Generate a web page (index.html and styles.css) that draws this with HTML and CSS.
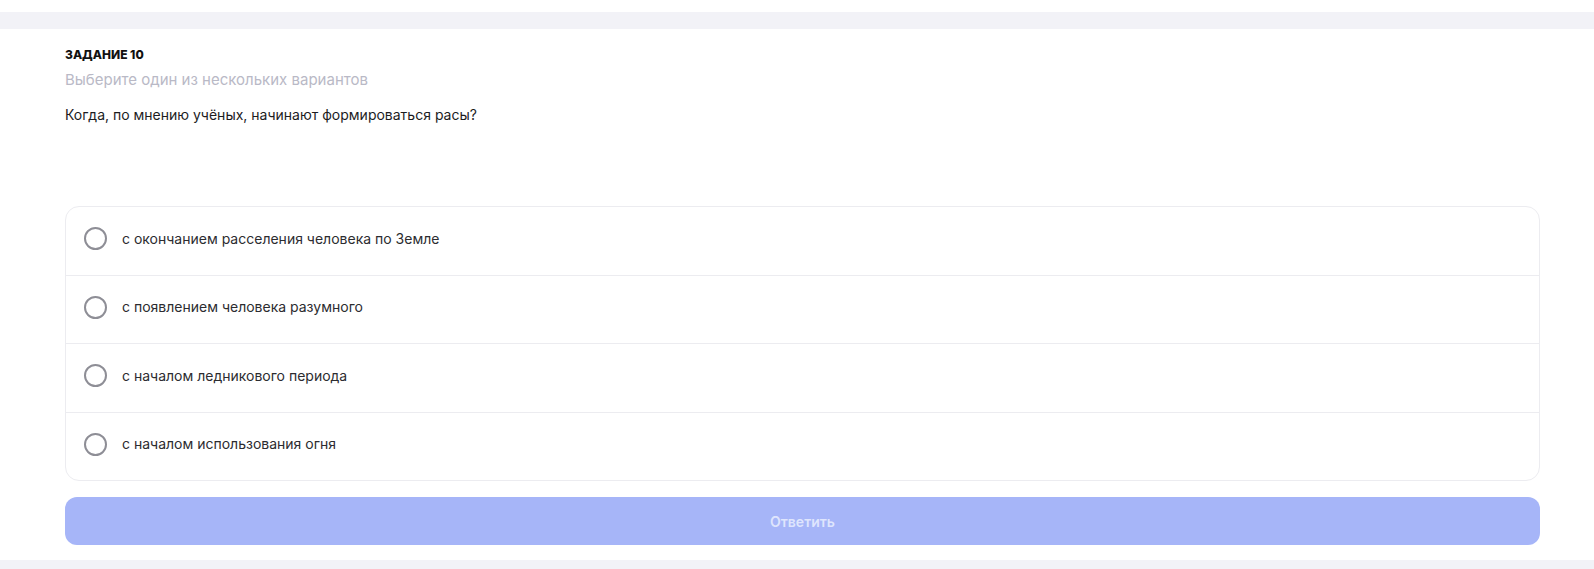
FILE: index.html
```html
<!DOCTYPE html>
<html lang="ru">
<head>
    <meta charset="UTF-8">
    <meta name="viewport" content="width=device-width, initial-scale=1.0">
    <title>Задание 10</title>
    <link rel="stylesheet" href="styles.css">
</head>
<body>
    <div class="top-gap"></div>
    <div class="divider-band"></div>

    <section class="task">
        <h4 class="task-title">Задание 10</h4>
        <div class="task-hint">Выберите один из нескольких вариантов</div>
        <p class="task-question">Когда, по мнению учёных, начинают формироваться расы?</p>

        <form class="answers">
            <label class="answer">
                <input type="radio" name="answer" value="1">
                <span class="answer-mark"></span>
                <span class="answer-text">с окончанием расселения человека по Земле</span>
            </label>
            <label class="answer">
                <input type="radio" name="answer" value="2">
                <span class="answer-mark"></span>
                <span class="answer-text">с появлением человека разумного</span>
            </label>
            <label class="answer">
                <input type="radio" name="answer" value="3">
                <span class="answer-mark"></span>
                <span class="answer-text">с началом ледникового периода</span>
            </label>
            <label class="answer">
                <input type="radio" name="answer" value="4">
                <span class="answer-mark"></span>
                <span class="answer-text">с началом использования огня</span>
            </label>
        </form>

        <button type="button" class="submit-btn" disabled>Ответить</button>
    </section>

    <div class="divider-band"></div>
</body>
</html>
```
FILE: styles.css
```css
body {
    margin: 0;
    background: #fff;
    font-family: Inter, "Noto Sans", sans-serif;
    color: #1c1c1e;
}

.top-gap {
    height: 12px;
}

/* серые полосы между блоками заданий */
.divider-band {
    height: 17px;
    background: #f2f2f7;
}

.task {
    padding: 18px 54px 15px 65px;
}

.task-title {
    margin: 0;
    font-size: 12px;
    line-height: 16px;
    font-weight: 800;
    text-transform: uppercase;
    color: #111;
}

.task-hint {
    margin-top: 7px;
    font-size: 15px;
    line-height: 20px;
    color: #b9b9c6;
}

.task-question {
    margin: 15px 0 0;
    font-size: 14px;
    line-height: 20px;
    color: #1c1c1e;
}

.answers {
    margin-top: 81px;
    border: 1px solid #ececf0;
    border-radius: 14px;
    overflow: hidden;
}

.answer {
    display: flex;
    align-items: center;
    gap: 15px;
    height: 67.5px;
    box-sizing: border-box;
    padding: 0 0 4px 18px;
    cursor: pointer;
}

.answer + .answer {
    border-top: 1px solid #ececf0;
    height: 68.5px;
}

.answer input {
    display: none;
}

.answer-mark {
    width: 19px;
    height: 19px;
    border: 2px solid #8e8e96;
    border-radius: 50%;
    flex-shrink: 0;
}

.answer input:checked + .answer-mark {
    border: 6px solid #5b6ff0;
    width: 11px;
    height: 11px;
}

.answer-text {
    font-size: 14px;
    line-height: 20px;
    color: #2c2c30;
}

.submit-btn {
    display: block;
    width: 100%;
    height: 48px;
    margin-top: 16px;
    border: none;
    border-radius: 12px;
    background: #a6b5f8;
    color: #dfe5fd;
    font-family: inherit;
    font-size: 14px;
    font-weight: 600;
}
```
